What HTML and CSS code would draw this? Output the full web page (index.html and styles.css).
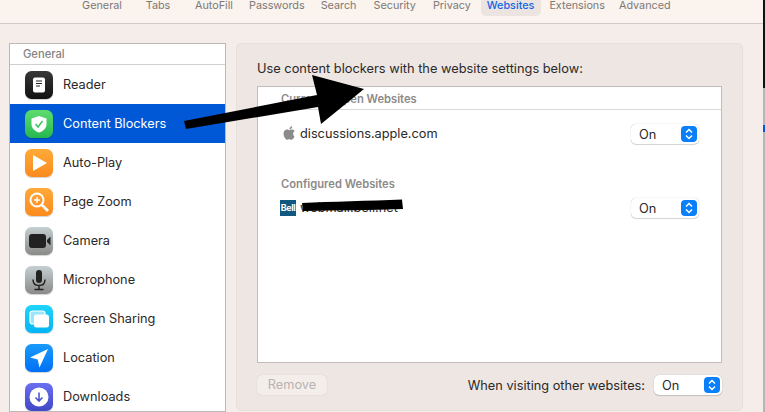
FILE: index.html
```html
<!DOCTYPE html>
<html lang="en">
<head>
<meta charset="utf-8">
<title>Websites</title>
<link rel="stylesheet" href="styles.css">
</head>
<body>
<div class="window">
  <nav class="tabs">
    <span class="tab wide">General</span>
    <span class="tab wide">Tabs</span>
    <span class="tab wide">AutoFill</span>
    <span class="tab">Passwords</span>
    <span class="tab">Search</span>
    <span class="tab">Security</span>
    <span class="tab">Privacy</span>
    <span class="tab active">Websites</span>
    <span class="tab">Extensions</span>
    <span class="tab">Advanced</span>
  </nav>
  <main class="content">
    <aside class="sidebar">
      <div class="side-head">General</div>
      <div class="side-row">
        <span class="icon i-reader"><svg viewBox="0 0 28 28"><rect x="8" y="6.500" width="12" height="15" rx="2" fill="#fff"/><path d="M11 10h6M11 12.500h6M11 15h4" stroke="#222" stroke-width="1.200"/></svg></span>Reader
      </div>
      <div class="side-row selected">
        <span class="icon i-shield"><svg viewBox="0 0 28 28"><path d="M14 6l7.500 2.600V14c0 4.200-3 7-7.500 8.600C9.500 21 6.500 18.200 6.500 14V8.600z" fill="#fff"/><path d="M10.500 14l2.500 3 4.500-6" fill="none" stroke="#3cc45e" stroke-width="1.500"/></svg></span>Content Blockers
      </div>
      <div class="side-row">
        <span class="icon i-play"><svg viewBox="0 0 28 28"><path d="M8 6l14 8-14 8z" fill="#fff"/></svg></span>Auto-Play
      </div>
      <div class="side-row">
        <span class="icon i-zoom"><svg viewBox="0 0 28 28"><circle cx="12" cy="12" r="6.500" fill="none" stroke="#fff" stroke-width="2"/><path d="M17 17l6 6" stroke="#fff" stroke-width="2.600"/><path d="M12 9v6M9 12h6" stroke="#fff" stroke-width="1.300"/></svg></span>Page Zoom
      </div>
      <div class="side-row">
        <span class="icon i-gray"><svg viewBox="0 0 28 28"><rect x="4" y="7" width="17" height="14" rx="3" fill="#222"/><path d="M22 13l3.500-3.500v9L22 15z" fill="#222"/></svg></span>Camera
      </div>
      <div class="side-row">
        <span class="icon i-gray"><svg viewBox="0 0 28 28"><rect x="11" y="4" width="6" height="13" rx="3" fill="#222"/><path d="M8 13.500c0 4 2.500 6 6 6s6-2 6-6M14 19.500V23M9.500 23.500h9" fill="none" stroke="#222" stroke-width="1.500"/></svg></span>Microphone
      </div>
      <div class="side-row">
        <span class="icon i-cyan"><svg viewBox="0 0 28 28"><rect x="5" y="6" width="15" height="13" rx="2.500" fill="#9be6fb" stroke="#fff" stroke-width="1.200"/><rect x="9" y="9.500" width="15" height="13" rx="2.500" fill="#fff"/></svg></span>Screen Sharing
      </div>
      <div class="side-row">
        <span class="icon i-blue"><svg viewBox="0 0 28 28"><path d="M23 5L14.500 23.500 12.700 15.500 5 13.500z" fill="#fff"/></svg></span>Location
      </div>
      <div class="side-row">
        <span class="icon i-indigo"><svg viewBox="0 0 28 28"><circle cx="14" cy="14" r="9.500" fill="#fff"/><path d="M14 9.500v8M10.500 14.500l3.500 3.500 3.500-3.500" fill="none" stroke="#4c55d0" stroke-width="1.600"/></svg></span>Downloads
      </div>
    </aside>
    <section class="panel">
      <p class="lead">Use content blockers with the website settings below:</p>
      <div class="table">
        <div class="table-head">Currently Open Websites</div>
        <div class="site first">
          <span class="favicon"><svg viewBox="2.700 1.800 10 12.100" width="12" height="14"><path d="M11.300 8.400c0-1.500 1.200-2.200 1.300-2.300-.7-1-1.800-1.200-2.200-1.200-.9-.1-1.800.6-2.300.6s-1.200-.6-2-.6C5 4.900 4 5.500 3.500 6.400c-1 1.800-.3 4.400.7 5.800.5.700 1.100 1.500 1.800 1.500s1-.5 1.900-.5 1.100.5 1.900.5 1.300-.7 1.800-1.400c.6-.8.800-1.600.8-1.700-.1 0-1.100-.6-1.100-2.200zM9.800 3.900c.4-.5.700-1.200.6-1.900-.6 0-1.300.4-1.700.9-.4.400-.7 1.100-.6 1.800.6 0 1.300-.4 1.700-.8z" fill="#8b8b8b"/></svg></span>
          <span class="site-name">discussions.apple.com</span>
          <span class="select"><span>On</span><span class="stepper"><svg viewBox="0 0 16 16"><path d="M5 6.500L8 3.500l3 3M5 9.500l3 3 3-3" fill="none" stroke="#fff" stroke-width="1.500"/></svg></span></span>
        </div>
        <div class="group-title">Configured Websites</div>
        <div class="site">
          <span class="bell">Bell</span>
          <span class="site-name">webmail.bell.net</span>
          <span class="select"><span>On</span><span class="stepper"><svg viewBox="0 0 16 16"><path d="M5 6.500L8 3.500l3 3M5 9.500l3 3 3-3" fill="none" stroke="#fff" stroke-width="1.500"/></svg></span></span>
        </div>
      </div>
      <div class="footer">
        <span class="remove">Remove</span>
        <span class="other">When visiting other websites:</span>
        <span class="select"><span>On</span><span class="stepper"><svg viewBox="0 0 16 16"><path d="M5 6.500L8 3.500l3 3M5 9.500l3 3 3-3" fill="none" stroke="#fff" stroke-width="1.500"/></svg></span></span>
      </div>
    </section>
  </main>
  <svg class="markup" viewBox="0 0 765 412" width="765" height="412">
    <polygon points="184,121 317,95 312,75 364,89 321,124 318,107 186,129" fill="#000"/>
    <path d="M302 203C330 201.500 370 201 402 199.500L403 209C370 210 335 210.500 303 211z" fill="#000"/>
    <path d="M763 0h2v88h-2z" fill="#111"/>
    <path d="M763 88h2v324h-2z" fill="#b9b5b3"/>
    <path d="M763 125h2v7h-2z" fill="#0058d6"/>
  </svg>
</div>
</body>
</html>
```
FILE: styles.css
```css
* { box-sizing: border-box; }
html, body { margin: 0; padding: 0; }
body { width: 765px; height: 412px; overflow: hidden; background: #f4edea; font-family: Inter, "Liberation Sans", sans-serif; color: #2b2928; font-size: 13px; }
.window { position: relative; width: 765px; height: 412px; overflow: hidden; display: flex; flex-direction: column; }

.tabs { height: 24px; flex: none; display: flex; padding: 0 0 0 76px; background: #faf3ee; border-bottom: 1px solid #cfc9c6; font-size: 10.800px; color: #7d7977; align-items: flex-start; gap: 4px; }
.tab { height: 16px; line-height: 11px; padding: 0 6px; border-radius: 0 0 5px 5px; text-align: center; white-space: nowrap; }
.tab.wide { min-width: 52px; }
.tab:nth-child(4) { margin-left: -1px; }
.tab:nth-child(6), .tab:nth-child(7) { margin-left: 1px; }
.tab:nth-child(9), .tab:nth-child(10) { margin-left: -2px; }
.tab.active { background: #ebe4e1; color: #1464e6; font-weight: 500; padding-right: 7px; }

.content { flex: 1; display: flex; gap: 10px; padding: 19px 22px 0 9px; min-height: 0; }
.sidebar { width: 217px; flex: none; height: 369px; background: #fff; border: 1px solid #bdb8b6; overflow: hidden; }
.side-head { height: 21px; line-height: 21px; padding-left: 13px; border-bottom: 1px solid #d3cfcd; font-size: 11.200px; font-weight: 500; color: #858382; }
.side-row { height: 39px; display: flex; align-items: center; gap: 10px; padding-left: 15px; font-size: 12.750px; white-space: nowrap; }
.side-row.selected { background: #0058d6; color: #fff; }
.icon { width: 28px; height: 28px; border-radius: 6.500px; flex: none; box-shadow: 0 1px 1px rgba(0,0,0,.18); overflow: hidden; display: block; }
.icon svg { display: block; width: 28px; height: 28px; }
.i-reader { background: linear-gradient(#383838, #111); }
.i-shield { background: linear-gradient(#5fdc6f, #25b84f); }
.i-play { background: linear-gradient(#ffaa38, #fb8a1e); }
.i-zoom { background: linear-gradient(#ffa938, #fb8a1e); }
.i-gray { background: linear-gradient(#c5d0d2, #8a8a88); }
.i-cyan { background: linear-gradient(#20d4fb, #04b4f5); }
.i-blue { background: linear-gradient(#1a9bfb, #0070f5); }
.i-indigo { background: linear-gradient(#6a6ff0, #4048c4); }

.panel { flex: 1; height: 368px; background: #ede6e3; border: 1px solid #e6dfdc; border-radius: 5px; padding: 0 20px 0 20px; display: flex; flex-direction: column; }
.lead { margin: 0; height: 42px; padding-top: 17px; line-height: 16px; font-size: 12.820px; white-space: nowrap; }
.table { width: 465px; height: 277px; flex: none; background: #fff; border: 1px solid #c2bdbb; padding: 0; }
.table-head { height: 23px; line-height: 25px; padding-left: 23px; border-bottom: 1px solid #dcd8d6; font-size: 11.200px; font-weight: 600; color: #8c8a89; }
.site { display: flex; align-items: center; height: 20px; padding-left: 22px; font-size: 12.750px; position: relative; }
.site.first { margin-top: 14px; }
.group-title { margin-top: 34px; height: 12px; line-height: 12px; padding-left: 23px; font-size: 11.200px; font-weight: 600; color: #8c8a89; }
.site .select { margin-left: auto; margin-right: 22px; }
.site-name { white-space: nowrap; position: relative; top: -1px; }
.favicon { width: 12px; height: 14px; margin-left: 3px; margin-right: 5px; flex: none; position: relative; top: -1px; }
.favicon svg { display: block; }
.bell { width: 16px; height: 16px; background: #10587f; color: #fff; font-size: 9px; font-weight: 700; line-height: 16px; text-align: center; letter-spacing: -.4px; flex: none; margin-right: 4px; }
.group-title + .site { margin-top: 8px; }

.select { width: 68px; height: 20px; flex: none; display: flex; align-items: center; justify-content: space-between; background: #fff; border-radius: 5px; box-shadow: 0 0 1px rgba(0,0,0,.3), 0 1px 1px rgba(0,0,0,.15); padding: 0 2px 0 8px; font-size: 12.750px; }
.stepper { width: 16px; height: 16px; background: #0a7ffb; border-radius: 4px; display: block; }
.stepper svg { display: block; width: 16px; height: 16px; }

.footer { display: flex; align-items: center; margin-top: 12px; height: 20px; }
.remove { width: 70px; height: 20px; line-height: 20px; text-align: center; background: #f4eeeb; border-radius: 5px; box-shadow: 0 0 1px rgba(0,0,0,.2); color: #b7b3b1; font-size: 12.750px; }
.other { margin-left: auto; margin-right: 9px; font-size: 12.750px; white-space: nowrap; }

.markup { position: absolute; left: 0; top: 0; pointer-events: none; }
```
